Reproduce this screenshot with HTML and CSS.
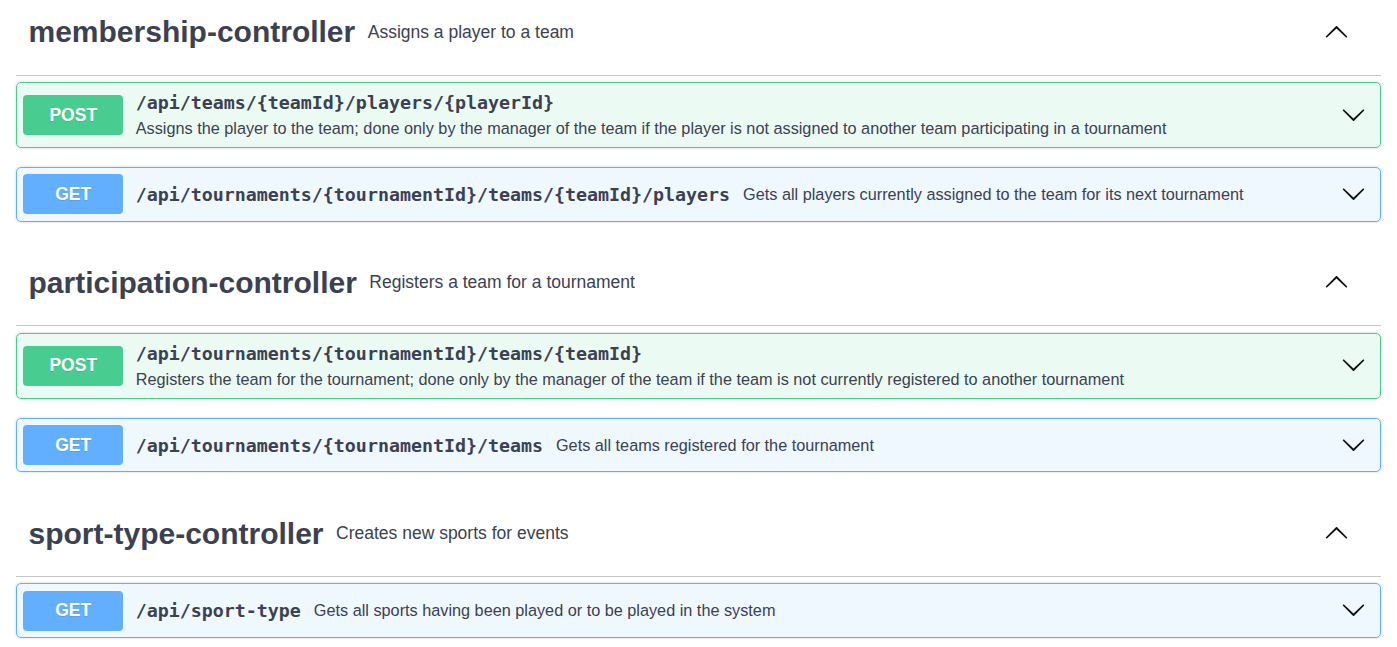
FILE: index.html
```html
<!DOCTYPE html>
<html lang="en">
<head>
<meta charset="utf-8">
<title>API</title>
<link rel="stylesheet" href="styles.css">
</head>
<body>
<div class="wrapper">

  <section class="tag-section">
    <h3 class="tag">
      <span class="tag-name">membership-controller</span>
      <small class="tag-desc">Assigns a player to a team</small>
      <button class="expand up" aria-label="collapse">
        <svg viewBox="0 0 20 20" width="25" height="25"><path d="M17.418 6.109c.272-.268.709-.268.979 0s.271.701 0 .969l-7.908 7.83c-.27.268-.707.268-.979 0l-7.908-7.83c-.27-.268-.27-.701 0-.969.271-.268.709-.268.979 0L10 13.25l7.418-7.141z"/></svg>
      </button>
    </h3>
    <div class="opblock post">
      <div class="summary">
        <span class="method">POST</span>
        <div class="path-wrap">
          <span class="path">/api/teams/{teamId}/players/{playerId}</span>
          <span class="desc">Assigns the player to the team; done only by the manager of the team if the player is not assigned to another team participating in a tournament</span>
        </div>
        <button class="expand" aria-label="expand">
          <svg viewBox="0 0 20 20" width="25" height="25"><path d="M17.418 6.109c.272-.268.709-.268.979 0s.271.701 0 .969l-7.908 7.83c-.27.268-.707.268-.979 0l-7.908-7.83c-.27-.268-.27-.701 0-.969.271-.268.709-.268.979 0L10 13.25l7.418-7.141z"/></svg>
        </button>
      </div>
    </div>
    <div class="opblock get">
      <div class="summary">
        <span class="method">GET</span>
        <div class="path-wrap">
          <span class="path">/api/tournaments/{tournamentId}/teams/{teamId}/players</span>
          <span class="desc">Gets all players currently assigned to the team for its next tournament</span>
        </div>
        <button class="expand" aria-label="expand">
          <svg viewBox="0 0 20 20" width="25" height="25"><path d="M17.418 6.109c.272-.268.709-.268.979 0s.271.701 0 .969l-7.908 7.83c-.27.268-.707.268-.979 0l-7.908-7.83c-.27-.268-.27-.701 0-.969.271-.268.709-.268.979 0L10 13.25l7.418-7.141z"/></svg>
        </button>
      </div>
    </div>
  </section>

  <section class="tag-section">
    <h3 class="tag">
      <span class="tag-name">participation-controller</span>
      <small class="tag-desc">Registers a team for a tournament</small>
      <button class="expand up" aria-label="collapse">
        <svg viewBox="0 0 20 20" width="25" height="25"><path d="M17.418 6.109c.272-.268.709-.268.979 0s.271.701 0 .969l-7.908 7.83c-.27.268-.707.268-.979 0l-7.908-7.83c-.27-.268-.27-.701 0-.969.271-.268.709-.268.979 0L10 13.25l7.418-7.141z"/></svg>
      </button>
    </h3>
    <div class="opblock post">
      <div class="summary">
        <span class="method">POST</span>
        <div class="path-wrap">
          <span class="path">/api/tournaments/{tournamentId}/teams/{teamId}</span>
          <span class="desc">Registers the team for the tournament; done only by the manager of the team if the team is not currently registered to another tournament</span>
        </div>
        <button class="expand" aria-label="expand">
          <svg viewBox="0 0 20 20" width="25" height="25"><path d="M17.418 6.109c.272-.268.709-.268.979 0s.271.701 0 .969l-7.908 7.83c-.27.268-.707.268-.979 0l-7.908-7.83c-.27-.268-.27-.701 0-.969.271-.268.709-.268.979 0L10 13.25l7.418-7.141z"/></svg>
        </button>
      </div>
    </div>
    <div class="opblock get">
      <div class="summary">
        <span class="method">GET</span>
        <div class="path-wrap">
          <span class="path">/api/tournaments/{tournamentId}/teams</span>
          <span class="desc">Gets all teams registered for the tournament</span>
        </div>
        <button class="expand" aria-label="expand">
          <svg viewBox="0 0 20 20" width="25" height="25"><path d="M17.418 6.109c.272-.268.709-.268.979 0s.271.701 0 .969l-7.908 7.83c-.27.268-.707.268-.979 0l-7.908-7.83c-.27-.268-.27-.701 0-.969.271-.268.709-.268.979 0L10 13.25l7.418-7.141z"/></svg>
        </button>
      </div>
    </div>
  </section>

  <section class="tag-section">
    <h3 class="tag">
      <span class="tag-name">sport-type-controller</span>
      <small class="tag-desc">Creates new sports for events</small>
      <button class="expand up" aria-label="collapse">
        <svg viewBox="0 0 20 20" width="25" height="25"><path d="M17.418 6.109c.272-.268.709-.268.979 0s.271.701 0 .969l-7.908 7.83c-.27.268-.707.268-.979 0l-7.908-7.83c-.27-.268-.27-.701 0-.969.271-.268.709-.268.979 0L10 13.25l7.418-7.141z"/></svg>
      </button>
    </h3>
    <div class="opblock get">
      <div class="summary">
        <span class="method">GET</span>
        <div class="path-wrap">
          <span class="path">/api/sport-type</span>
          <span class="desc">Gets all sports having been played or to be played in the system</span>
        </div>
        <button class="expand" aria-label="expand">
          <svg viewBox="0 0 20 20" width="25" height="25"><path d="M17.418 6.109c.272-.268.709-.268.979 0s.271.701 0 .969l-7.908 7.83c-.27.268-.707.268-.979 0l-7.908-7.83c-.27-.268-.27-.701 0-.969.271-.268.709-.268.979 0L10 13.25l7.418-7.141z"/></svg>
        </button>
      </div>
    </div>
  </section>

</div>
</body>
</html>
```

FILE: styles.css
```css
html, body {
  margin: 0;
  padding: 0;
  background: #ffffff;
}

body {
  font-family: "Liberation Sans", Arial, sans-serif;
  color: #3b4151;
  overflow: hidden;
}

.wrapper {
  padding: 0 16px;
  margin-top: -10.5px;
}

.tag-section {
  display: flex;
  flex-direction: column;
}

.tag {
  display: flex;
  align-items: center;
  box-sizing: border-box;
  height: 86px;
  margin: 0 0 6.25px;
  padding: 12.5px 32px 12.5px 12.5px;
  border-bottom: 1px solid rgba(59, 65, 81, 0.3);
  font-weight: 700;
}

.tag-name {
  font-size: 30px;
  font-weight: 700;
  color: #3b4151;
}

.tag-desc {
  flex: 1;
  padding: 0 12.5px;
  font-size: 17.5px;
  font-weight: 400;
  color: #3b4151;
}

.expand {
  display: flex;
  align-items: center;
  justify-content: center;
  background: none;
  border: none;
  padding: 0;
  margin: 0;
  cursor: pointer;
}

.expand svg {
  display: block;
  fill: #111111;
}

.expand.up svg {
  transform: rotate(180deg);
}

.opblock {
  margin: 0 0 18.75px;
  border: 1px solid;
  border-radius: 5px;
  box-shadow: 0 0 3px rgba(0, 0, 0, 0.19);
}

.opblock.post {
  background: rgba(73, 204, 144, 0.1);
  border-color: #49cc90;
}

.opblock.get {
  background: rgba(97, 175, 254, 0.1);
  border-color: #61affe;
}

.summary {
  display: flex;
  align-items: center;
  padding: 6.25px;
}

.method {
  flex: none;
  box-sizing: border-box;
  width: 100px;
  height: 40px;
  display: flex;
  align-items: center;
  justify-content: center;
  border-radius: 4px;
  color: #ffffff;
  font-size: 17.5px;
  font-weight: 700;
  text-shadow: 0 1px 0 rgba(0, 0, 0, 0.1);
}

.post .method {
  background: #49cc90;
}

.get .method {
  background: #61affe;
}

.path-wrap {
  flex: 1;
  display: flex;
  flex-wrap: wrap;
  align-items: center;
  padding: 0 0 0 12.5px;
}

.path {
  font-family: "DejaVu Sans Mono", "Liberation Mono", monospace;
  font-size: 18.3px;
  font-weight: 700;
  line-height: 27px;
  color: #3b4151;
  padding-right: 13px;
  white-space: nowrap;
}

.desc {
  font-size: 16.25px;
  line-height: 25px;
  color: #3b4151;
}

.opblock .expand {
  margin: 0 8px 2px 8px;
}
```
